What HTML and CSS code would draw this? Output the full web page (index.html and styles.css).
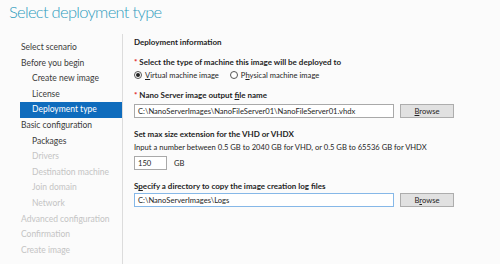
FILE: index.html
```html
<!DOCTYPE html>
<html lang="en">
<head>
  <meta charset="UTF-8">
  <title>Select deployment type</title>
  <link rel="stylesheet" href="styles.css">
</head>
<body>
  <h1 class="title">Select deployment type</h1>
  <div class="wizard">
    <ul class="steps">
      <li>Select scenario</li>
      <li>Before you begin</li>
      <li class="sub">Create new image</li>
      <li class="sub">License</li>
      <li class="sub current">Deployment type</li>
      <li>Basic configuration</li>
      <li class="sub">Packages</li>
      <li class="sub off">Drivers</li>
      <li class="sub off">Destination machine</li>
      <li class="sub off">Join domain</li>
      <li class="sub off">Network</li>
      <li class="off">Advanced configuration</li>
      <li class="off">Confirmation</li>
      <li class="off">Create image</li>
    </ul>

    <div class="page">
      <div class="section-title">Deployment information</div>

      <div class="label"><span class="req">*</span> Select the type of machine this image will be deployed to</div>
      <div class="radios">
        <label class="radio"><span class="dot checked"></span><span><u>V</u>irtual machine image</span></label>
        <label class="radio"><span class="dot"></span><span>P<u>h</u>ysical machine image</span></label>
      </div>

      <div class="label"><span class="req">*</span> Nano Server image output <u>f</u>ile name</div>
      <div class="field-row">
        <div class="field">C:\NanoServerImages\NanoFileServer01\NanoFileServer01.vhdx</div>
        <button class="btn"><u>B</u>rowse</button>
      </div>

      <div class="label after-field">Set max size extension for the VHD or VHDX</div>
      <div class="hint">Input a number between 0.5 GB to 2040 GB for VHD, or 0.5 GB to 65536 GB for VHDX</div>
      <div class="size-row">
        <div class="field small">150</div>
        <span>GB</span>
      </div>

      <div class="label after-field">S<u>p</u>ecify a directory to copy the image creation log files</div>
      <div class="field-row tight">
        <div class="field focus">C:\NanoServerImages\Logs</div>
        <button class="btn">B<u>r</u>owse</button>
      </div>
    </div>
  </div>
</body>
</html>
```
FILE: styles.css
```css
* {
  box-sizing: border-box;
  margin: 0;
  padding: 0;
}

body {
  background: #fbfbfb;
  color: #1e1e1e;
  font-family: Lato, 'Noto Sans', sans-serif;
  font-size: 7.6px;
  width: 500px;
  height: 264px;
  overflow: hidden;
}

.title {
  font-weight: 300;
  font-size: 16.5px;
  letter-spacing: -0.7px;
  color: #2f9bbd;
  padding: 0 0 0 9px;
  height: 34px;
  line-height: 24px;
}

.wizard {
  display: flex;
}

.steps {
  list-style: none;
  width: 123px;
  padding: 6px 0 0 20px;
  border-right: 1px solid #dcdcdc;
  height: 230px;
  font-size: 8.5px;
  color: #3a3a3a;
}

.steps li {
  height: 15.6px;
  line-height: 15.6px;
  padding-left: 1px;
}

.steps li.sub {
  padding-left: 12px;
}

.steps li.off {
  color: #c4c4c4;
}

.steps li.current {
  background: #0f6cbd;
  color: #fff;
}

.page {
  padding: 2px 0 0 11px;
  flex: 1;
}

.section-title {
  font-weight: bold;
  font-size: 8px;
  line-height: 12px;
}

.label {
  font-weight: bold;
  font-size: 8px;
  line-height: 12px;
  margin-top: 8px;
}

.label.after-field {
  margin-top: 10px;
}

.req {
  color: #e02020;
}

.radios {
  display: flex;
  gap: 11px;
  margin-top: 1px;
  height: 12px;
  align-items: center;
}

.radio {
  display: flex;
  align-items: center;
  gap: 3px;
}

.dot {
  width: 8px;
  height: 8px;
  border: 1px solid #555;
  border-radius: 50%;
  background: #fff;
  display: flex;
  align-items: center;
  justify-content: center;
}

.dot.checked::after {
  content: '';
  width: 4px;
  height: 4px;
  border-radius: 50%;
  background: #222;
}

.field-row {
  display: flex;
  gap: 6px;
  margin-top: 3px;
}

.field-row.tight {
  margin-top: 1px;
}

.field {
  width: 260px;
  height: 14px;
  border: 1px solid #a9a9a9;
  background: #fff;
  padding: 0 3px;
  line-height: 12px;
}

.field.focus {
  border-color: #86b8e8;
}

.field.small {
  width: 33px;
}

.btn {
  width: 54px;
  height: 14px;
  border: 1px solid #adadad;
  background: #e1e1e1;
  font: inherit;
  color: #1e1e1e;
  line-height: 12px;
}

.hint {
  margin-top: 1px;
  line-height: 12px;
}

.size-row {
  display: flex;
  align-items: center;
  gap: 7px;
  margin-top: 3px;
}
```
